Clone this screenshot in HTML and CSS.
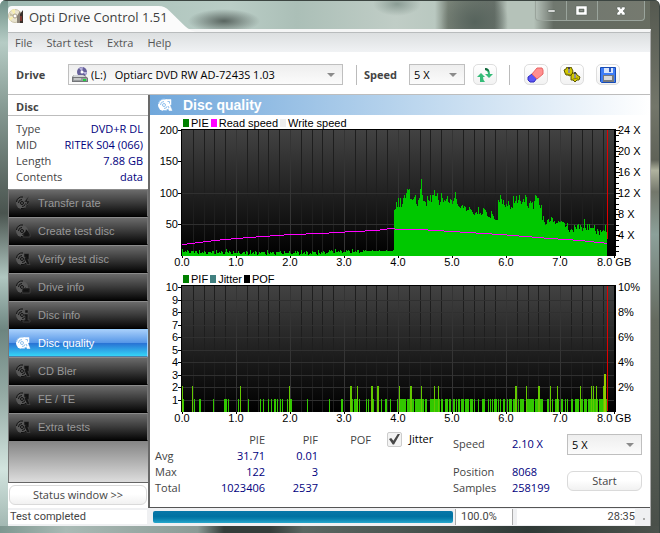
FILE: index.html
```html
<!DOCTYPE html>
<html lang="en">
<head>
<meta charset="utf-8">
<title>Opti Drive Control 1.51</title>
<link rel="stylesheet" href="styles.css">
</head>
<body>
<svg class="defs" aria-hidden="true">
  <symbol id="disc" viewBox="0 0 16 16">
    <circle class="face" cx="7" cy="8" r="6"/>
    <path class="ring" d="M1.500 7A5.500 5.500 0 0 1 8 2M3.500 8A3.500 3.500 0 0 1 7 4.500M10.500 8.500A3.500 3.500 0 0 1 7 11.500M12.500 10A6 6 0 0 1 6 13.500"/>
    <circle class="ring" cx="7" cy="8" r="1.500"/>
  </symbol>
  <symbol id="lens" viewBox="0 0 16 16"><path class="mark" d="M9 2.500h5v5l-1 1 2 5h-3l-1-4-2-1 1-2-1-1z"/><path class="ring" d="M10.500 4.500h2v2M11 9l1 2"/></symbol>
  <symbol id="bolt" viewBox="0 0 16 16"><path class="mark" d="M14 1l-5 6h3l-2 6 5-7h-3z"/></symbol>
  <symbol id="burn" viewBox="0 0 16 16"><path class="mark" d="M11 6l2 2 2 3v3H8v-4l2-1z"/><path class="ring" d="M10 12h3"/></symbol>
  <symbol id="drive" viewBox="0 0 16 16"><path class="mark" d="M8 9h7v5H7v-3z"/><path class="ring" d="M9 11.500h4"/></symbol>
  <symbol id="info" viewBox="0 0 16 16"><path class="mark" d="M10 3h3v3h-3zM9 7h4v6h2v2H8v-2h2V9H9z"/></symbol>
</svg>

<div class="window">
  <header class="titlebar">
    <svg class="tab-shape" viewBox="0 0 190 27" preserveAspectRatio="none" aria-hidden="true"><path d="M0 27V4Q0 0 4 0H152Q159 0 163 5L179 21Q183 25 190 27Z"/></svg>
    <svg class="app-icon" viewBox="0 0 16 16" aria-hidden="true">
      <circle cx="7" cy="8" r="6.500" fill="#e9e4cf" stroke="#c9c2a8"/>
      <path d="M7 8L3 2l4-1zM7 8l-6 2 1 3z" fill="#f8f0b0"/><path d="M7 8l-5-3 0 3z" fill="#c9c3a3"/>
      <circle cx="7" cy="8" r="2" fill="#fff" stroke="#aaa18a"/>
      <path d="M9 15V8l3-5 1 4v8z" fill="#8b8378"/><path d="M12 15V6l3-4v13z" fill="#392f2b"/><path d="M13 8v5" stroke="#c04038"/>
    </svg>
    <h1>Opti Drive Control 1.51</h1>
    <div class="controls">
      <button aria-label="Minimize"><svg viewBox="0 0 14 12"><path d="M4 5h7v2H4z"/></svg></button>
      <button aria-label="Maximize"><svg viewBox="0 0 14 12"><path fill-rule="evenodd" d="M1 1h11v9H1zM4 4v3h5V4z"/><path d="M5 5h3v1H5z" opacity=".5"/></svg></button>
      <button aria-label="Close"><svg viewBox="0 0 14 12"><path d="M3 2h3l1 2 1-2h3v2L9 6l2 2v2H8L7 8l-1 2H3V8l2-2-2-2z"/></svg></button>
    </div>
  </header>

  <div class="client">
    <nav class="menu"><button>File</button><button>Start test</button><button>Extra</button><button>Help</button></nav>

    <div class="toolbar">
      <label class="caption drive-caption" for="drive">Drive</label>
      <div class="picker drive-picker">
        <svg class="drive-icon" viewBox="0 0 16 16" aria-hidden="true">
          <circle cx="10" cy="5" r="5" fill="#66609b"/><path d="M10 5L7 1l4-1zM10 5l4 3 1-3z" fill="#b8b3dc"/><circle cx="10" cy="5" r="1.500" fill="#fff"/>
          <path d="M2 8h10l4 3v4H0v-5z" fill="#737578"/><path d="M2 8h9l3 2H1z" fill="#d2d5d7"/><path d="M1 11h14v3H1z" fill="#999c9e"/><path d="M2 12h7" stroke="#eee"/><path d="M11 12h3v2h-3z" fill="#1ed340"/>
        </svg>
        <select id="drive"><option>(L:)&nbsp;&nbsp; Optiarc DVD RW AD-7243S 1.03</option></select>
      </div>
      <span class="divider"></span>
      <label class="caption" for="speed">Speed</label>
      <div class="picker speed-picker"><select id="speed"><option>5 X</option></select></div>
      <button class="tool" aria-label="Refresh"><svg viewBox="0 0 18 16"><path d="M5 6l4 4H7q0 3 2 5H4v-5H1z" fill="#35bc78"/><path d="M9 1q5 0 5 6h3l-4 4-4-4h3q0-3-3-4z" fill="#35bc78"/><path d="M9 1q4 0 4 4-1-2-4-2z" fill="#17653c"/></svg></button>
      <span class="divider"></span>
      <button class="tool" aria-label="Erase"><svg viewBox="0 0 18 16"><path d="M1 10l4-3 5 4-3 4-4 0-2-2z" fill="#5b55f5" stroke="#322cbd"/><path d="M5 7l5-6h5l1 2v4l-6 5z" fill="#ff8f8f" stroke="#e86464"/></svg></button>
      <button class="tool" aria-label="Settings"><svg viewBox="0 0 18 16"><g fill="#d3c900" stroke="#5d5700"><path d="M1 3l2-1 1-2 2 1 2-1 1 2 1 2-1 3-2 2-2-1-2 0-1-2z"/><path d="M8 8l2-2 3 0 1 2 3 2-1 3-2 0-2 2-2-2-2 0 0-2z"/></g><path d="M6 0v6M12 5v6" stroke="#444" stroke-width="2"/><path d="M6 2v4M12 7v4" stroke="#ddd"/><path d="M3 7l5 1M10 12l5-1" stroke="#8a8200"/></svg></button>
      <button class="tool" aria-label="Save"><svg viewBox="0 0 18 16"><path d="M1.500 .5h15v15h-14l-1-1z" fill="#3f7df5" stroke="#174bb4"/><path d="M5 1h9v5H5z" fill="#d9e5fa"/><path d="M10 1h2v4h-2z" fill="#345bbd"/><path d="M4 8h11v7H4z" fill="#76797d"/><path d="M5 9h8v4H5z" fill="#dadada"/></svg></button>
    </div>

    <div class="workspace">
      <aside class="sidebar">
        <h2>Disc</h2>
        <dl class="disc-data">
          <dt>Type</dt><dd>DVD+R DL</dd><dt>MID</dt><dd>RITEK S04 (066)</dd><dt>Length</dt><dd>7.88 GB</dd><dt>Contents</dt><dd>data</dd>
        </dl>
        <nav class="tests">
          <button><svg><use href="#disc"/><use href="#bolt"/></svg>Transfer rate</button>
          <button><svg><use href="#disc"/><use href="#burn"/></svg>Create test disc</button>
          <button><svg><use href="#disc"/><use href="#lens"/></svg>Verify test disc</button>
          <button><svg><use href="#disc"/><use href="#drive"/></svg>Drive info</button>
          <button><svg><use href="#disc"/><use href="#info"/></svg>Disc info</button>
          <button class="active"><svg><use href="#disc"/><use href="#lens"/></svg>Disc quality</button>
          <button><svg><use href="#disc"/><use href="#lens"/></svg>CD Bler</button>
          <button><svg><use href="#disc"/><use href="#lens"/></svg>FE / TE</button>
          <button><svg><use href="#disc"/><use href="#lens"/></svg>Extra tests</button>
        </nav>
        <div class="status-toggle"><button class="soft">Status window &gt;&gt;</button></div>
      </aside>

      <main>
        <h2 class="heading"><svg><use href="#disc"/><use href="#lens"/></svg>Disc quality</h2>
        <div class="legend"><span class="key green">PIE</span><span class="key magenta">Read speed</span><span class="key pale">Write speed</span></div>
        <svg class="chart" id="pie-chart" viewBox="0 0 500 142" role="img" aria-label="PIE and read speed"></svg>
        <div class="legend"><span class="key green">PIF</span><span class="key teal">Jitter</span><span class="key black">POF</span></div>
        <svg class="chart" id="pif-chart" viewBox="0 0 500 142" role="img" aria-label="PIF"></svg>

        <section class="results">
          <table>
            <thead><tr><th></th><th scope="col">PIE</th><th scope="col">PIF</th><th scope="col">POF</th></tr></thead>
            <tbody>
              <tr><th scope="row">Avg</th><td>31.71</td><td>0.01</td><td></td></tr>
              <tr><th scope="row">Max</th><td>122</td><td>3</td><td></td></tr>
              <tr><th scope="row">Total</th><td>1023406</td><td>2537</td><td></td></tr>
            </tbody>
          </table>
          <label class="jitter"><input type="checkbox" checked>Jitter</label>
          <dl class="live"><dt>Speed</dt><dd>2.10 X</dd><dt>Position</dt><dd>8068</dd><dt>Samples</dt><dd>258199</dd></dl>
          <div class="run">
            <div class="picker"><select aria-label="Test speed"><option>5 X</option></select></div>
            <button class="soft">Start</button>
          </div>
        </section>
      </main>
    </div>

    <footer class="statusbar">
      <span class="message">Test completed</span>
      <span class="progress" role="progressbar" aria-label="Test progress" aria-valuenow="100"></span>
      <span class="percent">100.0%</span>
      <span class="time">28:35</span>
      <span class="grip"></span>
    </footer>
  </div>
</div>
<script src="charts.js"></script>
</body>
</html>
```
FILE: styles.css
```css
* { box-sizing: border-box; }
body { margin: 0; font: 12px/16px "Open Sans", "Noto Sans", sans-serif; color: #444; }
button, select, input { font: inherit; color: inherit; margin: 0; }
button { border: 0; background: none; padding: 0; }
h1, h2, dl, dd { margin: 0; }
.defs { position: absolute; width: 0; height: 0; }

.window {
  display: flex; flex-direction: column; min-height: 100vh; padding: 0 8px 7px;
  border-bottom: 1px solid #3c4541; border-right: 1px solid #3c4541; border-radius: 6px 6px 0 0;
  background:
    linear-gradient(#3c4541, #3c4541) top / 100% 1px no-repeat,
    linear-gradient(90deg, #7e9790, #a9bab5 10%, #8b9b96 30%, #343d3a 34%, #343d3a 41%, #5b6762 46%, #4b5752 60%, #2f3936 80%, #4c524c) bottom / 100% 7px no-repeat,
    linear-gradient(#6f9087, #b6ccc5 8%, #879b94 20%, #4a544f 40%, #b0c7c1 52%, #6d8580 62%, #94aaa4 74%, #d2e4df 88%, #9db3ad) left / 8px 100% no-repeat,
    linear-gradient(#555950, #73766a 20%, #5f6258 30%, #b0b39f 32%, #73776b 36%, #8ca09a 44%, #656b60 60%, #494f49) right / 9px 100% no-repeat,
    radial-gradient(ellipse 36px 12px at 224px 21px, #596560, transparent),
    radial-gradient(ellipse 34px 30px at 475px 22px, #56635c, transparent),
    radial-gradient(ellipse 24px 12px at 397px 4px, #8a9c94, transparent),
    linear-gradient(90deg, #9db9b1, #bacdc6 35%, #abbfb7 45%, #c0cdc6 60%, #b9c8c0 66%, #788277 68%, #68716a 75%, #b5c2b9 77%, #b5c2b9 81%, #626a61 84%, #686d61 100%);
}
.titlebar { position: relative; display: flex; align-items: flex-start; height: 29px; padding-top: 6px; }
.tab-shape { position: absolute; left: 0; bottom: -3px; width: 188px; height: 26px; fill: #fbfbfb; }
.app-icon { position: relative; width: 16px; height: 16px; margin-top: 2px; }
h1 { position: relative; flex: 1; margin: 2px 0 0 5px; font-size: 13px; line-height: 18px; font-weight: 400; color: #3f3f3f; }
.controls { display: flex; margin: -5px 6px 0 0; border: 1px solid #9aa49c; border-top: 0; border-radius: 0 0 4px 4px; background: #ffffff18; }
.controls button { width: 31px; height: 19px; display: grid; place-items: center; border-right: 1px solid #9aa49c; }
.controls button:last-child { width: 46px; border: 0; }
.controls svg { width: 14px; height: 12px; fill: #fff; stroke: #56605a; stroke-width: .5; }

.client { flex: 1; display: flex; flex-direction: column; background: #fff; border-top: 3px solid #f4f5f5; border-right: 1px solid #aaa; }
.menu { display: flex; gap: 14px; padding: 0 7px; height: 20px; border-top: 1px solid #b9bcbd; background: linear-gradient(#dcdfe0, #f0f2f4); color: #555; font-size: 11px; }
.menu button { line-height: 18px; }

.toolbar { display: flex; align-items: center; height: 42px; padding-left: 8px; padding-top: 3px; }
.caption { font-size: 11px; font-weight: 700; color: #444; }
.drive-caption { width: 52px; }
.picker { position: relative; display: flex; align-items: center; border: 1px solid #bfbfbf; background: linear-gradient(#eee, #fbfbfb); height: 21px; color: #000; }
.picker::after { content: ""; position: absolute; right: 7px; top: 8px; border: 4px solid transparent; border-top: 4px solid #8b8b8b; border-bottom: 0; pointer-events: none; }
select { appearance: none; width: 100%; height: 19px; padding: 0 4px; border: 0; border-radius: 0; background: none; font-size: 11px; color: #000; }
.drive-picker { flex: 1; max-width: 275px; }
.drive-icon { width: 16px; height: 16px; margin-left: 3px; flex: none; }
.drive-picker select { padding: 0 3px; }
.divider { width: 1px; height: 20px; margin: 0 7px 0 13px; background: #bbb; }
.speed-picker { width: 56px; margin: 0 8px 0 12px; }
.tool { width: 24px; height: 21px; margin-right: 12px; display: grid; place-items: center; border: 1px solid #dedede; border-radius: 5px; background: linear-gradient(#fff, #f2f2f2); }
.tool svg { width: 18px; height: 16px; }
.tool + .divider { margin: 0 14px 0 0; }

.workspace { flex: 1; display: flex; border-top: 1px solid #bdbdbd; }
.sidebar { flex: none; width: 140px; display: flex; flex-direction: column; }
.sidebar h2 { height: 21px; padding: 4px 8px 0; font-size: 11px; line-height: 16px; border-bottom: 1px solid #bdbdbd; }
.disc-data { display: grid; grid-template-columns: auto 1fr; grid-auto-rows: 16px; padding: 5px 5px 4px 8px; font-size: 11px; }
.disc-data dd { text-align: right; }
dd, td { color: #00007d; }
.tests { flex: 1; min-height: 294px; border-bottom: 1px solid #656565; background: linear-gradient(#777 85%, #848484 86%, #ddd); border-left: 1px solid #777; font: 11px/16px "Liberation Sans", sans-serif; }
.tests button { display: flex; align-items: center; gap: 7px; width: 100%; height: 28px; padding-left: 6px; color: #999; border: 1px solid #777; border-width: 1px 1px 1px 0; border-top-color: #8b8b8b; border-bottom-color: #000; background: linear-gradient(#6b6b6b, #3a3a3a 50%, #050505); }
.tests svg { width: 16px; height: 16px; --face: #575757; --ring: #111; --mark: #161616; --edge: #555; }
.face { fill: var(--face); }
.ring { fill: none; stroke: var(--ring); }
.mark { fill: var(--mark); stroke: var(--edge); stroke-width: .5; }
.tests .active { color: #fff; border-color: #9cd0ff; border-bottom-color: #4a7fa8; background: linear-gradient(#a5cdfa, #5898e8 48%, #2974d5 52%, #35d4f7); }
.tests .active svg, .heading svg { --face: #fff; --ring: #8fc0ee; --mark: #fff; --edge: #fff; }
.status-toggle { padding: 2px 1px 3px; }
.soft { width: 100%; height: 20px; border: 1px solid #dadada; border-radius: 6px; background: linear-gradient(#fff 45%, #f1f1f1); font-size: 11px; line-height: 16px; }

main { flex: 1; min-width: 0; display: flex; flex-direction: column; border-left: 2px solid #696969; border-bottom: 1px solid #555; }
.heading { display: flex; align-items: center; gap: 10px; height: 20px; padding-left: 7px; color: #fff; background: linear-gradient(90deg, #70a7db, #b8d4ed 50%, #fff); font: 700 14px/20px "Liberation Sans", sans-serif; }
.heading svg { width: 16px; height: 16px; }
.legend { display: flex; gap: 2px; height: 14px; padding: 1px 0 0 33px; color: #000; font: 11px/14px "Liberation Sans", sans-serif; }
.key::before { content: ""; display: inline-block; width: 6px; height: 8px; margin-right: 2px; background: currentColor; }
.green::before { background: #008000; }
.magenta::before { background: #f0f; }
.pale::before { background: #eee; }
.teal::before { background: #408080; }
.chart { display: block; width: 100%; height: auto; overflow: visible; font: 11px "Liberation Sans", sans-serif; }

.results { flex: 1; display: flex; align-items: flex-start; padding: 4px 8px 2px 5px; font-size: 11px; }
table { border-collapse: collapse; table-layout: fixed; width: 216px; flex: none; }
th, td { height: 16px; padding: 0; text-align: right; font-weight: 400; line-height: 16px; }
thead th { height: 17px; }
th:first-child { width: 54px; text-align: left; }
th:nth-child(2) { width: 56px; }
.jitter { display: flex; align-items: center; gap: 7px; width: 66px; margin-left: 16px; color: #000; }
.jitter input { appearance: none; display: grid; place-items: center; width: 15px; height: 15px; border: 1px solid #ccc; border-radius: 2px; background: #f3f3f3; }
.jitter input:checked::after { content: ""; width: 11px; height: 11px; background: #484848; clip-path: polygon(0 50%, 20% 42%, 40% 66%, 82% 0, 100% 4%, 46% 100%, 34% 100%); }
.live { display: grid; grid-template-columns: 59px auto; grid-template-rows: 28px 16px 16px; padding-top: 5px; }
.run { display: grid; gap: 16px; width: 75px; margin: 3px 0 0 auto; }

.statusbar { display: flex; align-items: center; height: 18px; background: #eff0f2; font: 11px/14px "Roboto", sans-serif; }
.message { width: 139px; height: 14px; padding-left: 2px; background: #fff; flex: none; }
.progress { flex: 1; height: 12px; margin: 0 2px 0 6px; border-radius: 2px; background: linear-gradient(#0877a8, #0072a2 45%, #087fad 65%, #27a8cc); }
.percent { width: 58px; height: 16px; padding: 1px 5px; border-left: 1px solid #aaa; border-right: 1px solid #aaa; background: #fff; }
.time { width: 118px; height: 16px; padding-top: 1px; margin-left: 4px; text-align: right; background: #fff; }
.grip { width: 2px; height: 2px; margin: 4px 5px 0 8px; background: #aaa; }
```
FILE: charts.js
```js
const NS = 'http://www.w3.org/2000/svg';
const LEFT = 32, TOP = 1, BASE = 127, RIGHT = 465, UNIT = 54;

function add(parent, tag, attrs, text) {
  const node = document.createElementNS(NS, tag);
  for (const key in attrs) node.setAttribute(key, attrs[key]);
  if (text !== undefined) node.textContent = text;
  parent.appendChild(node);
  return node;
}
function line(svg, x, y, w, h, fill) {
  add(svg, 'rect', { x, y: Math.round(y), width: w, height: h, fill, 'shape-rendering': 'crispEdges' });
}
function label(svg, x, y, text, anchor) {
  add(svg, 'text', { x, y, 'text-anchor': anchor || 'start', fill: '#000' }, text);
}

function frame(svg, id, gridRows) {
  const gradient = add(svg, 'linearGradient', { id, x2: 0, y2: 1 });
  add(gradient, 'stop', { offset: 0, 'stop-color': '#424242' });
  add(gradient, 'stop', { offset: 1, 'stop-color': '#000' });
  line(svg, LEFT - 1, 0, RIGHT - LEFT + 2, BASE, '#000');
  line(svg, LEFT, TOP, RIGHT - LEFT - 1, BASE - TOP - 1, `url(#${id})`);
  for (let i = 1; i < 40; i++) {
    if (i % 5) line(svg, Math.round(LEFT + i * UNIT / 5), TOP, 1, BASE - TOP, '#1e1e1e');
  }
  gridRows.forEach(y => line(svg, LEFT, y, RIGHT - LEFT - 1, 1, '#303030'));
  for (let i = 0; i <= 8; i++) {
    const x = LEFT + i * UNIT;
    if (i && i < 8) line(svg, x, TOP, 1, BASE - TOP, '#343434');
    line(svg, x, BASE, 1, 2, '#000');
    if (i < 8) label(svg, x, 137, i + '.0', 'middle');
  }
  label(svg, 447, 137, '8.0 GB');
}

// Inner parity errors: one column per pixel, in plot units.
const dense = [46,47,54,49,58,49,
  58,49,52,58,61,58,63,67,66,67,57,57,56,57,59,61,52,50,56,58,67,77,61,55,55,54,50,60,56,55,61,54,61,61,66,60,
  60,63,56,51,54,63,58,54,56,55,57,60,54,53,57,56,52,55,58,64,57,52,50,49,48,50,51,48,50,49,45,46,46,49,47,46,
  44,42,41,43,44,42,49,42,43,41,42,48,47,46,44,40,39,39,38,45,42,40,37,36,36,36,56,54,61,57,52,56,51,
  49,52,50,55,51,47,49,48,60,53,55,60,53,56,61,55,52,54,57,54,61,59,50,48,53,55,53,54,47,55,
  61,60,58,58,51,48,51,36,40,34,31,32,36,37,34,35,39,38,34,35,32,33,33,35,34,34,35,34,34,33,29,30,33,26,24,26,
  27,26,24,31,29,27,31,32,27,31,29,25,28,37,28,26,32,26,32,28,28,28,28,31,25,22,27,25,21,26,24,25,26,25,31,24,17];
const pie = document.getElementById('pie-chart');
frame(pie, 'pie-bg', [64, 95]);
let area = `M${LEFT} ${BASE}`;
const low = [6,5,5,4,3,5,4,3,5,4,4,3,4,5,3,3,2,4,5,2,2,4,3,2,3,4,2,3,3,4];
for (let i = 0; i < 212; i++) {
  const lift = i < 12 || i > 145 ? 1 : 0;
  const h = i === 44 ? 7 : i > 182 ? 5 + (i % 7 === 1 ? 1 : 0) : low[(i * 7 + (i >> 4)) % 30] + lift - (i > 50 && i < 140 && i % 3 === 0 ? 1 : 0);
  area += `V${BASE - h}h1`;
}
dense.slice(0, 213).forEach(h => { area += `V${BASE - h}h1`; });
add(pie, 'path', { d: area + `V${BASE}Z`, fill: '#00c800', 'shape-rendering': 'crispEdges' });

// Read speed, drawn as one-pixel steps between the sampled points.
const speed = [[32,115],[64,111],[86,109],[112,107],[140,105],[170,104],[202,102],[226,101],[240,99],[250,100],[270,100],[302,102],[350,105],[400,109],[430,111],[458,114]];
let steps = '';
for (let x = 32, k = 0; x < 457; x++) {
  while (speed[k + 1][0] <= x) k++;
  const [x0, y0] = speed[k], [x1, y1] = speed[k + 1];
  steps += `M${x} ${Math.round(y0 + (y1 - y0) * (x - x0) / (x1 - x0))}h1v1h-1z`;
}
add(pie, 'path', { d: steps, fill: '#ff00ff', 'shape-rendering': 'crispEdges' });
line(pie, 457, TOP, 1, 109, '#e00000');
[200, 150, 100, 50].forEach((n, i) => {
  line(pie, 28, 1 + i * 31.3, 4, 1, '#000');
  label(pie, 28, 5 + Math.round(i * 31.3), n, 'end');
});
for (let n = 1; n <= 24; n++) {
  const y = 127 - n * 5.25;
  line(pie, 466, y, n % 4 ? 3 : 4, 1, '#000');
  if (n % 4 === 0) label(pie, 468, Math.round(y) + 4, n + ' X');
}

// Inner parity failures: [pixel column, width, count].
const failures = [
  [182,1,2],[183,1,1],[192,1,2],[194,1,1],[199,2,1],[213,1,1],[224,3,1],[228,1,1],[238,1,1],[240,1,2],[248,1,1],
  [260,1,1],[263,1,1],[268,1,1],[271,1,1],[274,2,1],[277,1,1],[280,1,1],[282,1,1],[287,1,1],[289,1,2],[290,2,1],
  [307,1,1],[329,1,1],[341,2,1],[350,2,2],[352,1,1],[354,3,1],[357,1,2],[359,1,1],[366,1,1],[368,1,1],[371,2,2],
  [373,1,1],[377,2,2],[381,1,1],[385,2,1],[390,1,1],[397,1,1],[399,1,2],[400,6,1],[407,3,1],[410,2,2],[412,2,1],
  [415,6,1],[421,1,2],[422,2,1],[425,2,1],[430,4,1],[434,1,2],[435,1,1],[436,2,1],[438,1,2],[439,1,1],[441,2,1],
  [445,3,1],[449,2,1],[453,2,1],[456,1,1],[458,2,1],[461,3,1],[465,4,1],[470,3,1],[474,1,1],[478,1,1],[482,3,1],
  [488,1,1],[490,1,1],[492,1,1],[494,3,1],[498,1,1],[500,1,1],[503,2,1],[507,1,1],[509,3,1],[513,2,1],[515,2,2],
  [518,1,1],[520,4,1],[526,1,2],[527,7,1],[535,3,1],[538,2,2],[540,3,1],[547,2,1],[550,1,2],[552,1,1],[555,2,1],
  [557,1,2],[558,1,1],[561,2,1],[565,1,1],[567,1,1],[571,2,1],[575,4,1],[580,1,2],[581,2,1],[584,3,1],[588,3,1],
  [591,1,2],[592,1,1],[593,1,2],[594,2,1],[596,1,2],[597,1,1],[599,4,1],[603,1,2],[604,2,3],[606,1,1]];
const pif = document.getElementById('pif-chart');
const rows = [];
for (let n = 1; n < 10; n++) rows.push(127 - n * 12.5);
frame(pif, 'pif-bg', rows);
failures.forEach(([x, w, n]) => {
  const h = [0, 13, 26, 38][n];
  line(pif, x - 150, BASE - h, w, h, ['', '#32c800', '#64c800', '#96c800'][n]);
});
line(pif, 457, TOP, 1, 125, '#e00000');
for (let n = 1; n <= 10; n++) {
  const y = Math.round(127 - n * 12.5);
  line(pif, 28, y, 4, 1, '#000');
  label(pif, 28, y + 4, n, 'end');
  if (n % 2 === 0) label(pif, 468, y + 4, n + '%');
}
```
